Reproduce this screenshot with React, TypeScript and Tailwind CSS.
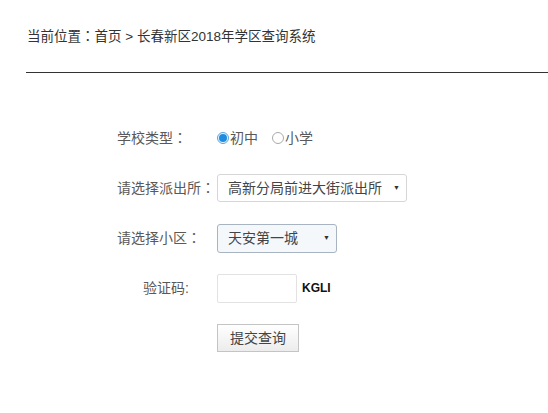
const Colon = () => (
  <span style={{ fontFamily: '"Noto Sans CJK JP", sans-serif' }}>：</span>
)

export default function App() {
  const cjk = { fontFamily: '"Liberation Sans", "Noto Sans CJK SC", sans-serif' }

  return (
    <div className="min-h-[413px] bg-white pt-[26px] pl-[27px] text-[14px] text-[#595959]" style={cjk}>
      {/* 面包屑 */}
      <div className="h-[18px] text-[13.5px] leading-[18px] text-[#333]">
        当前位置<Colon />首页 &gt; 长春新区2018年学区查询系统
      </div>
      <div className="-ml-px mt-[28px] h-px bg-[#333]" />

      {/* 查询表单 */}
      <div className="pt-[40px] pl-[90px]">
        <div className="flex h-[50px] items-center">
          <span className="w-[100px]">学校类型<Colon /></span>
          <label className="flex items-center">
            <span className="mr-px flex h-[12px] w-[12px] items-center justify-center rounded-full border border-[#5ba4e0] bg-[#eaf4fc]">
              <span className="h-[8px] w-[8px] rounded-full bg-[#1f8ce0]" />
            </span>
            <span>初中</span>
          </label>
          <label className="ml-[14px] flex items-center">
            <span className="mr-px h-[12px] w-[12px] rounded-full border border-[#aaa] bg-white" />
            <span>小学</span>
          </label>
        </div>

        <div className="flex h-[50px] items-center">
          <span className="w-[100px]">请选择派出所<Colon /></span>
          <div className="flex h-[28px] w-[190px] items-center justify-between rounded-[3px] border border-[#d6d6d6] bg-white pl-[10px] pr-[6px] text-[#444]">
            <span>高新分局前进大街派出所</span>
            <span className="text-[7px] text-[#333]">▼</span>
          </div>
        </div>

        <div className="flex h-[50px] items-center">
          <span className="w-[100px]">请选择小区<Colon /></span>
          <div className="flex h-[29px] w-[120px] items-center justify-between rounded-[3px] border border-[#a8b4c2] bg-[#f4f8fb] pl-[10px] pr-[6px] text-[#444]">
            <span>天安第一城</span>
            <span className="text-[7px] text-[#333]">▼</span>
          </div>
        </div>

        <div className="flex h-[50px] items-center">
          <span className="w-[100px] pl-[26px]">验证码:</span>
          <div className="h-[29px] w-[80px] rounded-[2px] border border-[#e2e2e2] bg-white" />
          <span className="ml-[5px] text-[12px] font-bold text-[#111]">KGLI</span>
        </div>

        <div className="flex h-[50px] items-center">
          <span className="w-[100px]" />
          <button className="h-[28px] w-[82px] border border-[#c4c4c4] bg-gradient-to-b from-white to-[#ececec] text-[14px] text-[#444]">
            提交查询
          </button>
        </div>
      </div>
    </div>
  )
}
